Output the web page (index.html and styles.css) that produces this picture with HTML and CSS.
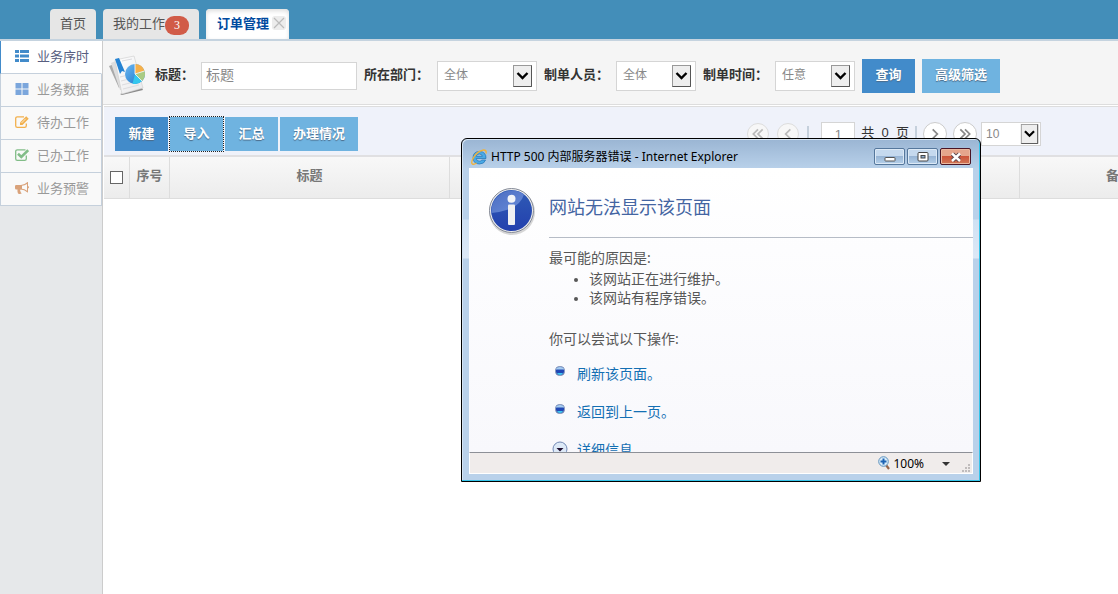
FILE: index.html
```html
<!DOCTYPE html>
<html lang="zh-CN">
<head>
<meta charset="utf-8">
<title>订单管理</title>
<link rel="stylesheet" href="styles.css">
</head>
<body>
<svg class="defs" aria-hidden="true">
  <symbol id="arrow" viewBox="0 0 19 22"><rect x=".5" y=".5" width="18" height="21" fill="#eee" stroke="#999"/><path d="M.5 21.500h18V.5" fill="none" stroke="#555"/><path d="M4.500 8l5 5 5-5" fill="none" stroke="#000" stroke-width="2.400"/></symbol>
</svg>
<header class="topbar">
  <nav class="tabs">
    <button class="tab">首页</button>
    <button class="tab">我的工作<span class="badge">3</span></button>
    <button class="tab tab-active">订单管理<svg class="tab-close" viewBox="0 0 14 14"><rect width="14" height="14" rx="3" fill="#ececec"/><path d="M2 2l10 10M12 2L2 12" stroke="#bbb" stroke-width="1.200"/></svg></button>
  </nav>
</header>
<div class="layout">
  <aside class="sidebar">
    <a class="side-item side-active" href="#"><svg viewBox="0 0 14 12" fill="#428bca"><path d="M0 0h4v3H0zM5 0h9v3H5zM0 4.500h4v3H0zM5 4.500h9v3H5zM0 9h4v3H0zM5 9h9v3H5z"/></svg>业务序时</a>
    <a class="side-item" href="#"><svg viewBox="0 0 14 12" fill="#7ba6dc"><path d="M.5 0h6v5.500h-6zM7.500 0h6v5.500h-6zM.5 6.500h6V12h-6zM7.500 6.500h6V12h-6z"/></svg>业务数据</a>
    <a class="side-item" href="#"><svg viewBox="0 0 14 12" fill="none" stroke="#f2b04d"><path d="M9 .8H2.300A1.600 1.600 0 0 0 .7 2.400v7.300A1.600 1.600 0 0 0 2.300 11.300h7.400A1.600 1.600 0 0 0 11.300 9.700V7.500" stroke-width="1.300"/><path d="M5 6.500L11.200.3l2.500 2.500-6.200 6.200H5z" fill="#f2b04d" stroke="none"/><path d="M6.500 7l4.300-4.300" stroke="#fff" stroke-width=".7"/></svg>待办工作</a>
    <a class="side-item" href="#"><svg viewBox="0 0 14 12" fill="none" stroke="#82bd88"><path d="M10.500.8H2.300A1.600 1.600 0 0 0 .7 2.400v7.300A1.600 1.600 0 0 0 2.300 11.300h7.400A1.600 1.600 0 0 0 11.300 9.700V6.500" stroke-width="1.300"/><path d="M3 4.800l3.300 3.200 6.900-6.700" stroke-width="2.600"/></svg>已办工作</a>
    <a class="side-item" href="#"><svg viewBox="0 0 14 12" fill="#d9a27a"><path d="M0 4.200Q0 3 1.200 3H6Q9.500 2.800 12.500 0h.5v4q1 .4 1 1.200T13 6.500v4h-.5Q9.300 7.600 5.500 7.500q-.8 1 0 2 0 1 1.300 1.800-.8.700-2.300.6-1.500-.2-1.600-.7Q2.200 9 2.500 7.500H1.200Q0 7.500 0 6.300zM7 3.800v2.900q2.600.2 5 2V1.900Q9.600 3.600 7 3.800z" fill-rule="evenodd"/></svg>业务预警</a>
  </aside>
  <main class="main">
    <form class="filters">
      <svg class="report-icon" viewBox="0 0 40 40">
        <defs>
          <linearGradient id="pie" x1="0" y1="0" x2="1" y2="1"><stop offset="0" stop-color="#6db9f2"/><stop offset="1" stop-color="#1671c9"/></linearGradient>
          <linearGradient id="sheet" x1="0" y1="0" x2="1" y2="1"><stop offset="0" stop-color="#fff"/><stop offset="1" stop-color="#e8e8ea"/></linearGradient>
        </defs>
        <path d="M1 11l8-3 6 22-4 3z" fill="#aaa"/><path d="M3 8l9-4 5 30-5 1z" fill="#ddd"/>
        <path d="M12 39L34 33l1 2-21 5z" fill="#8a8a8a"/>
        <path d="M7 5L26 1l9 32-21 6z" fill="url(#sheet)" stroke="#ccc" stroke-width=".6"/>
        <path d="M12 22l8-2M13 26l8-2M14 30l16-4M15 34l16-4M14 6l10-2" stroke="#dcdcdf"/>
        <path d="M7 4l4-1 6 14-3-1-2 3z" fill="#2583d3"/>
        <circle cx="27" cy="19" r="10" fill="url(#pie)"/>
        <path d="M27 19V9A10 10 0 0 1 36.500 16z" fill="#f5b04a"/><path d="M27 19l9.500-3a10 10 0 0 1-2.500 10z" fill="#a9cb83"/><path d="M27 19l7 7a10 10 0 0 1-9.500 2.700z" fill="#34c7ee"/><path d="M27 9v10l9.500-3M27 19l7 7" fill="none" stroke="#fff" stroke-width=".8"/>
      </svg>
      <label for="f-title">标题：</label>
      <input id="f-title" class="text-input" type="text" placeholder="标题">
      <label for="f-dept">所在部门：</label>
      <span class="select select-wide"><select id="f-dept"><option>全体</option></select><svg><use href="#arrow"/></svg></span>
      <label for="f-user">制单人员：</label>
      <span class="select"><select id="f-user"><option>全体</option></select><svg><use href="#arrow"/></svg></span>
      <label for="f-time">制单时间：</label>
      <span class="select"><select id="f-time"><option>任意</option></select><svg><use href="#arrow"/></svg></span>
      <button type="button" class="btn btn-primary">查询</button>
      <button type="button" class="btn">高级筛选</button>
    </form>
    <div class="toolbar">
      <div class="actions">
        <button class="btn btn-primary">新建</button>
        <button class="btn btn-focus">导入</button>
        <button class="btn">汇总</button>
        <button class="btn">办理情况</button>
      </div>
      <div class="pager">
        <button class="round round-off" aria-label="首页"><svg viewBox="0 0 12 12"><path d="M6 2L2 6l4 4M10 2L6 6l4 4"/></svg></button>
        <button class="round round-off" aria-label="上一页"><svg viewBox="0 0 12 12"><path d="M8 2L4 6l4 4"/></svg></button>
        <span class="bar"></span>
        <input class="page-no" type="text" value="1" aria-label="页码">
        <span class="page-total">共&nbsp; 0 &nbsp;页</span>
        <span class="bar"></span>
        <button class="round" aria-label="下一页"><svg viewBox="0 0 12 12"><path d="M4 2l4 4-4 4"/></svg></button>
        <button class="round" aria-label="末页"><svg viewBox="0 0 12 12"><path d="M2 2l4 4-4 4M6 2l4 4-4 4"/></svg></button>
        <span class="select select-size"><select aria-label="每页条数"><option>10</option></select><svg><use href="#arrow"/></svg></span>
      </div>
    </div>
    <div class="grid">
      <table>
        <colgroup><col class="c-check"><col class="c-no"><col class="c-title"><col class="c-mid"><col class="c-note"></colgroup>
        <thead><tr><th><input type="checkbox" aria-label="全选"></th><th>序号</th><th>标题</th><th></th><th>备注</th></tr></thead>
      </table>
    </div>
  </main>
</div>

<section class="window" aria-label="Internet Explorer">
  <div class="titlebar">
    <svg class="ie" viewBox="0 0 16 16"><path d="M15 9.500H5.200q.3 2.700 3.200 2.700 1.700 0 2.500-1.200h3.700Q13.300 15 8.400 15 2 14.800 2 8.700 2.200 2.600 8.300 2.400 15.300 2.600 15 9.500zM5.300 7.300h6Q11 5 8.300 5 5.700 5 5.300 7.300z" fill="#4aaae6" stroke="#2173b5" stroke-width=".7" fill-rule="evenodd"/><path d="M15 4.500Q15.700.8 12.500 1 6.500 2 2.500 8.500-.5 14 1.500 15.200q1.500.5 4-1.200" fill="none" stroke="#f0b23c" stroke-width="1.400"/></svg>
    <h1>HTTP 500 内部服务器错误 - Internet Explorer</h1>
    <div class="win-buttons">
      <button aria-label="最小化"><svg viewBox="0 0 14 12"><rect x="2" y="6.500" width="10" height="3.500" rx=".5" fill="#fff" stroke="#555"/></svg></button>
      <button aria-label="最大化"><svg viewBox="0 0 14 12"><rect x="2" y="1.500" width="10" height="8.500" rx="1" fill="#fff" stroke="#444"/><rect x="5" y="4.500" width="4" height="2.500" fill="#8fb0d4" stroke="#444"/></svg></button>
      <button class="win-close" aria-label="关闭"><svg viewBox="0 0 14 12"><path d="M3.500 3l7 6.500M10.500 3l-7 6.500" stroke="#504048" stroke-width="4.400"/><path d="M3 2.500l8 7.500M11 2.500L3 10" stroke="#fff" stroke-width="2.400"/></svg></button>
    </div>
  </div>
  <div class="win-inner">
    <div class="win-page">
      <svg class="info" viewBox="0 0 48 48">
        <defs><linearGradient id="ball" x1="0" y1="0" x2="0" y2="1"><stop offset="0" stop-color="#2f5bb5"/><stop offset="1" stop-color="#2340ae"/></linearGradient><linearGradient id="gloss" x1="0" y1="0" x2="1" y2="1"><stop offset="0" stop-color="#4a6cc0"/><stop offset="1" stop-color="#6a8ddb"/></linearGradient></defs>
        <circle cx="24" cy="25" r="23" fill="#bbb" opacity=".6"/>
        <circle cx="23.500" cy="23.500" r="22" fill="#eee" stroke="#858b98"/>
        <circle cx="23.500" cy="23.500" r="20.500" fill="url(#ball)"/>
        <path d="M3.500 26A20.500 20.500 0 0 1 36 7.500Q33 17 22 22 13 25 3.500 26z" fill="url(#gloss)"/>
        <circle cx="23.500" cy="11.800" r="4" fill="#f2f4f8"/><rect x="20" y="17.500" width="7" height="20.500" rx="1" fill="#f0f0f2"/>
      </svg>
      <div class="message">
        <h2>网站无法显示该页面</h2>
        <p>最可能的原因是:</p>
        <ul class="causes"><li>该网站正在进行维护。</li><li>该网站有程序错误。</li></ul>
        <p class="try">你可以尝试以下操作:</p>
        <div class="option"><svg viewBox="0 0 16 16"><rect x="3.500" y="2.500" width="9" height="9" rx="4" fill="#2148b5" stroke="#8d9cb8"/><path d="M4 5.500q0-2.500 4-2.500t4 2.500z" fill="#a8cdf0"/><path d="M5 9h6q-1 2-3 2T5 9z" fill="#42c8f0"/></svg><a href="#">刷新该页面。</a></div>
        <div class="option"><svg viewBox="0 0 16 16"><rect x="3.500" y="2.500" width="9" height="9" rx="4" fill="#2148b5" stroke="#8d9cb8"/><path d="M4 5.500q0-2.500 4-2.500t4 2.500z" fill="#a8cdf0"/><path d="M5 9h6q-1 2-3 2T5 9z" fill="#42c8f0"/></svg><a href="#">返回到上一页。</a></div>
        <div class="option"><svg viewBox="0 0 16 16"><circle cx="8" cy="9" r="7" fill="#dde9f7" stroke="#7289b5"/><path d="M4.500 8h7L8 11.500z" fill="#201030"/></svg><a href="#">详细信息</a></div>
      </div>
    </div>
    <footer class="status">
      <button class="zoom"><svg class="lens" viewBox="0 0 12 14"><path d="M8 9l3 4" stroke="#97664a" stroke-width="2.200"/><circle cx="5.500" cy="5.500" r="4.800" fill="#d8ecfa" stroke="#5e92bd"/><path d="M5.500 2.500v6M2.500 5.500h6" stroke="#1c63b4" stroke-width="2"/></svg>100%<svg class="caret" viewBox="0 0 8 4"><path d="M0 0h8L4 4z" fill="#333"/></svg></button>
      <svg class="grip" viewBox="0 0 9 9" fill="#c0bcbc"><path d="M6 0h2v2H6zM3 3h2v2H3zM6 3h2v2H6zM0 6h2v2H0zM3 6h2v2H3zM6 6h2v2H6z"/></svg>
    </footer>
  </div>
</section>
</body>
</html>
```
FILE: styles.css
```css
* { box-sizing: border-box; }
body {
  margin: 0;
  min-height: 100vh;
  position: relative;
  display: flex;
  flex-direction: column;
  overflow: hidden;
  background: #fff;
  font: 13px/20px "Liberation Sans", "Noto Sans CJK SC", sans-serif;
  color: #333;
}
button, input, select { font: inherit; color: inherit; margin: 0; }
button { border: 0; padding: 0; background: none; }
a { text-decoration: none; color: inherit; }
svg { display: block; flex: none; }
.defs { position: absolute; width: 0; height: 0; }

.topbar { background: #438eb9; padding: 9px 0 0 50px; border-bottom: 2px solid #c5d3df; }
.tabs { display: flex; gap: 7px; }
.tab {
  display: flex;
  align-items: center;
  height: 30px;
  padding: 0 10px;
  border-radius: 4px 4px 0 0;
  background: #e6e6e6;
  color: #555;
}
.badge {
  min-width: 24px;
  height: 19px;
  margin-top: 2px;
  border-radius: 9px;
  background: #d15b47;
  color: #fff;
  font: 12px/18px "Liberation Serif", serif;
}
.tab-active { background: #fff; color: #004a9f; font-weight: bold; padding: 0 3px 0 11px; box-shadow: inset 0 2px 4px #ddd; }
.tab-close { width: 14px; height: 14px; margin: 0 0 2px 3px; }

.layout { flex: 1; display: flex; }
.sidebar { width: 103px; flex: none; background: #e6e8ea; border-right: 1px solid #ccc; }
.side-item {
  display: flex;
  align-items: center;
  gap: 8px;
  height: 33px;
  padding: 0 0 1px 14px;
  border: 1px solid #c5d0dc;
  border-top: 0;
  background: #f9f9f9;
  color: #999;
}
.side-item svg { width: 14px; height: 12px; margin-bottom: 2px; }
.side-active { background: #fff; color: #585e80; border-left-color: #428bca; border-right-color: #fff; }

.main { flex: 1; min-width: 0; }
.filters {
  display: flex;
  align-items: center;
  gap: 7px;
  padding: 17px 0 11px 5px;
  background: #f5f5f5;
  border-bottom: 1px solid #ddd;
}
.filters label { font-weight: bold; flex: none; padding-bottom: 2px; }
.filters .select-wide { margin-left: 1px; }
.report-icon { width: 40px; height: 40px; margin: -3px 0 -2px; }
.text-input {
  width: 156px;
  height: 28px;
  border: 1px solid #d5d5d5;
  padding: 0 4px 2px;
  background: #fff;
  font-size: 14px;
}
.text-input::placeholder { color: #888; }
.select { display: grid; align-items: center; width: 80px; height: 30px; flex: none; }
.select select {
  grid-area: 1 / 1;
  width: 100%;
  height: 100%;
  appearance: none;
  border: 1px solid #d5d5d5;
  border-radius: 0;
  background: #fff;
  color: #888;
  font-size: 12px;
  padding: 0 6px 1px;
}
.select svg { grid-area: 1 / 1; justify-self: end; width: 19px; height: 22px; margin-right: 5px; pointer-events: none; }
.select-wide { width: 100px; }
.select-size { width: 60px; height: 24px; }
.select-size select { padding: 0 4px; }
.select-size svg { height: 20px; margin-right: 2px; }
.btn {
  height: 34px;
  min-width: 53px;
  flex: none;
  padding: 0 13px 1px;
  background: #6fb3e0;
  color: #fff;
  font-weight: bold;
  text-shadow: 0 1px 1px #4a6a88;
}
.btn-primary { background: #428bca; }
.btn-focus { outline: 1px dotted #222; }

.toolbar {
  display: flex;
  justify-content: space-between;
  margin: 1px 0 0 1px;
  padding: 10px 77px 4px 11px;
  background: #eff2fa;
  border-top: 1px solid #ddd;
  border-bottom: 2px solid #e0e0e2;
}
.actions { display: flex; gap: 2px; }
.pager { display: flex; align-items: center; height: 24px; margin-top: 5px; gap: 6px; }
.round {
  display: grid;
  place-items: center;
  width: 24px;
  height: 24px;
  border: 1px solid #ccc;
  border-radius: 50%;
  background: #fff;
}
.round svg { width: 14px; height: 14px; fill: none; stroke: #888; stroke-width: 1.5px; }
.round-off { width: 22px; height: 22px; margin-right: 2px; background: #f7f7f7; border-color: #ddd; }
.round-off svg { stroke: #bbb; }
.bar { width: 2px; height: 16px; background: #c5d0dc; }
.page-no { width: 34px; height: 24px; margin-left: 6px; padding: 1px 2px; border: 1px solid #d5d5d5; background: #fff; color: #888; text-align: center; }
.page-total { white-space: nowrap; padding-bottom: 2px; }
.pager .select-size { margin-left: -2px; }

.grid { overflow: hidden; margin-left: 1px; }
.grid table { table-layout: fixed; width: 1115px; border-spacing: 0; }
.grid th {
  height: 42px;
  padding: 0 0 4px;
  border: solid #ddd;
  border-width: 0 1px 1px 0;
  background: linear-gradient(#f8f8f8, #ececec);
  color: #777;
}
.grid th input { appearance: none; display: block; width: 13px; height: 13px; margin: 4px auto 0; border: 1px solid #666; background: #fff; }
.c-check { width: 26px; }
.c-no { width: 40px; }
.c-title { width: 280px; }
.c-mid { width: 570px; }
.c-note { width: 199px; }

.window {
  position: absolute;
  left: 461px;
  top: 138px;
  width: 520px;
  padding: 0 7px 7px;
  border: 1px solid #000;
  border-radius: 6px 6px 0 0;
  background: linear-gradient(#9ab5d3, #b9d1ea 30px, #b9d1ea 80px, #cfe1f3 81px, #dce8f6 119px, #b9d1ea 120px);
  box-shadow: inset -1px -1px #35c5ea, inset 1px 1px #d5e4f3;
  font-family: "Noto Sans", "Noto Sans CJK SC", sans-serif;
}
.titlebar { display: flex; align-items: center; height: 29px; padding: 6px 2px 0; }
.ie { width: 16px; height: 16px; }
.titlebar h1 { flex: 1; margin: 0 0 0 4px; font-size: 12px; font-weight: normal; color: #000; white-space: nowrap; }
.win-buttons { display: flex; gap: 2px; }
.win-buttons button {
  display: grid;
  place-items: center;
  width: 31px;
  height: 17px;
  border: 1px solid #55779c;
  border-radius: 2px;
  background: linear-gradient(#c5d9ee 50%, #98b5d5 50%, #b5d0ea);
  box-shadow: inset 0 0 0 1px #dce9f6;
}
.win-buttons svg { width: 14px; height: 12px; }
.win-buttons .win-close { border-color: #4a1525; background: linear-gradient(#e5a58c 45%, #cc5036 45%, #d07858); box-shadow: inset 0 0 0 1px #eab8a0; }
.win-page {
  display: flex;
  gap: 13px;
  height: 284px;
  overflow: hidden;
  padding: 19px 0 0 19px;
  background: linear-gradient(#fff, #f8f8fc);
  font-size: 14px;
  line-height: 19px;
  color: #575757;
}
.info { width: 48px; height: 48px; }
.message { flex: 1; }
.message h2 { margin: 0 0 10px; padding: 9px 0 18px; border-bottom: 1px solid #b6bcc6; font-size: 18px; line-height: 23px; font-weight: normal; color: #4465a2; }
.message p { margin: 0 0 2px; }
.causes { margin: 0 0 22px; padding: 0 0 0 40px; }
.causes li::marker { font-size: 12px; }
.message .try { margin-bottom: 16px; }
.option { display: flex; gap: 9px; height: 38px; padding-left: 3px; color: #136fb3; }
.option svg { width: 16px; height: 16px; }
.status { display: flex; align-items: center; justify-content: flex-end; height: 22px; padding: 2px 1px 0 0; background: #f0eceb; border: 1px solid #fff; border-top-color: #8d9097; }
.zoom { display: flex; align-items: center; font-size: 12px; color: #000; }
.lens { width: 12px; height: 14px; margin: 0 3px 2px 0; }
.caret { width: 8px; height: 4px; margin: 0 12px 0 18px; }
.grip { width: 9px; height: 9px; align-self: flex-end; }
```
